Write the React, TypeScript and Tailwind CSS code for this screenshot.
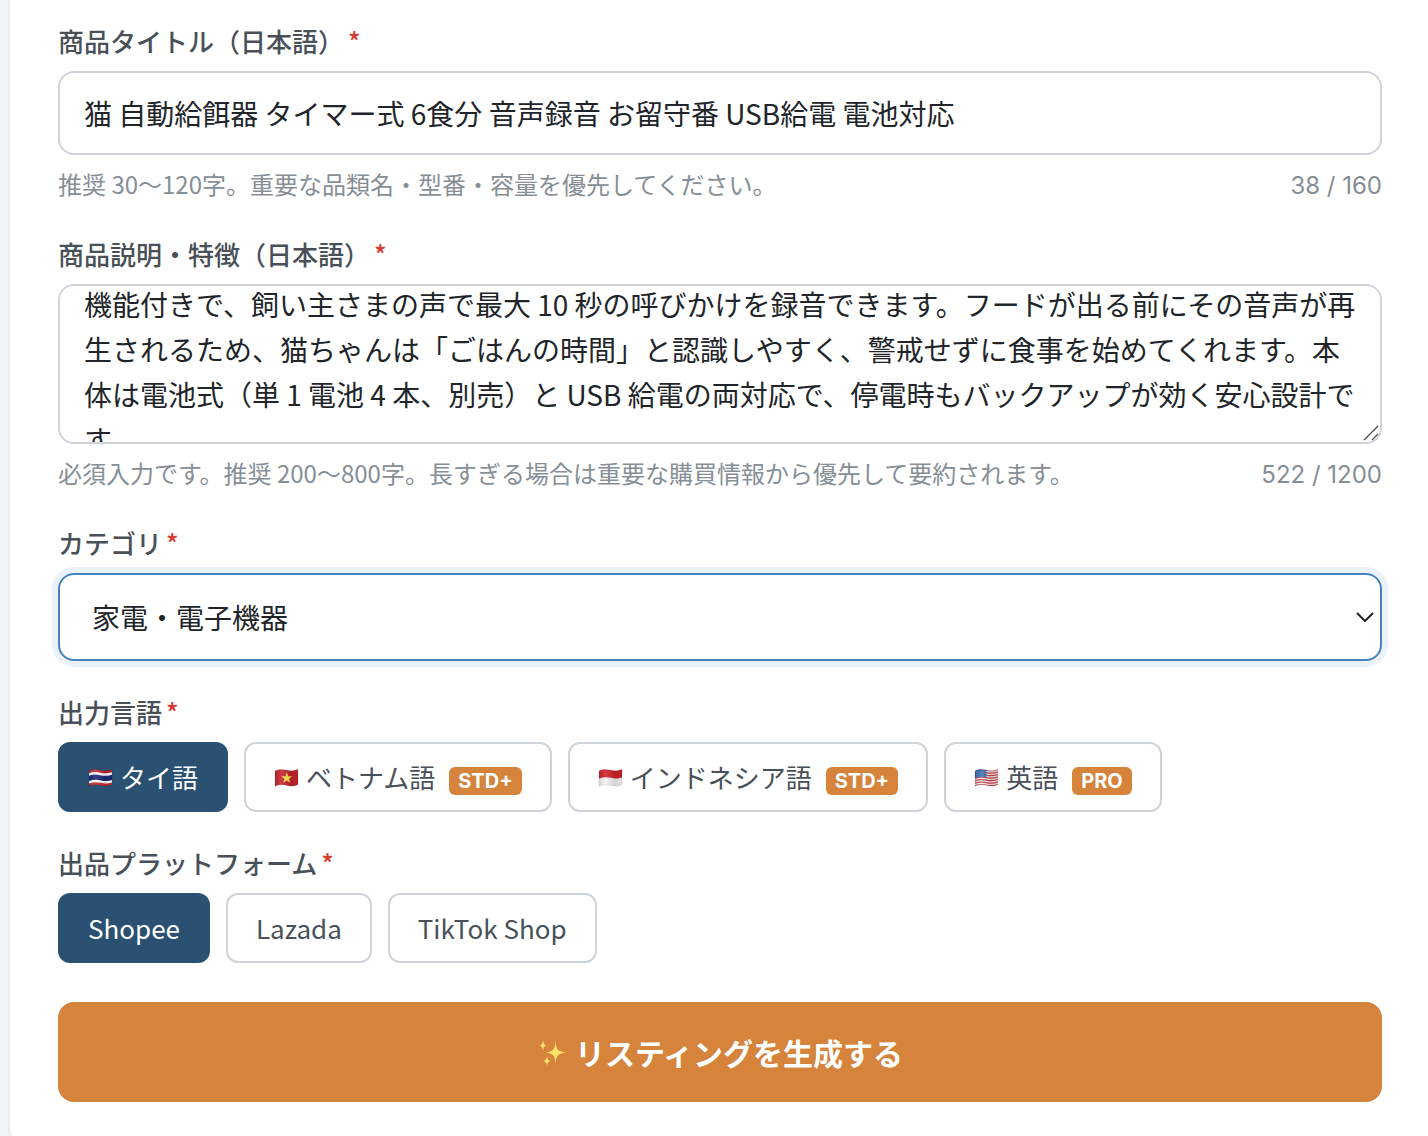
import { useEffect, useId, useRef, useState, type ReactNode } from 'react'

const INITIAL_TITLE =
  '猫 自動給餌器 タイマー式 6食分 音声録音 お留守番 USB給電 電池対応'

const INITIAL_DESCRIPTION =
  '機能付きで、飼い主さまの声で最大 10 秒の呼びかけを録音できます。フードが出る前にその音声が再生されるため、猫ちゃんは「ごはんの時間」と認識しやすく、警戒せずに食事を始めてくれます。本体は電池式（単 1 電池 4 本、別売）と USB 給電の両対応で、停電時もバックアップが効く安心設計です。'

// gently waving flag outline, shared by every flag
const WAVE = 'M1 5.5C5 3.5 8 3.6 12 4.6S20 5.6 24 3.8V19C20 21 17 20.9 13 19.9S5 19 1 20.8Z'

function Flag({ id, children }: { id: string; children: ReactNode }) {
  return (
    <svg className="size-[26px] shrink-0" viewBox="0 -1.5 26 26" aria-hidden="true">
      <defs>
        <clipPath id={`flag-${id}`}>
          <path d={WAVE} />
        </clipPath>
        <linearGradient id={`shade-${id}`} x1="0" x2="1" y1="0" y2="0">
          <stop offset="0" stopColor="#000" stopOpacity="0.12" />
          <stop offset="0.3" stopColor="#fff" stopOpacity="0.12" />
          <stop offset="0.65" stopColor="#000" stopOpacity="0.12" />
          <stop offset="1" stopColor="#000" stopOpacity="0.04" />
        </linearGradient>
      </defs>
      <g clipPath={`url(#flag-${id})`}>
        {children}
        <rect width="26" height="26" fill={`url(#shade-${id})`} />
      </g>
      <path d={WAVE} fill="none" stroke="#000" strokeOpacity="0.15" strokeWidth="0.6" />
    </svg>
  )
}

function ThaiFlag() {
  return (
    <Flag id="th">
      <rect width="26" height="26" fill="#c42a33" />
      <path d="M0 8.2C5 6.2 8 6.3 12 7.2S20 8.2 26 6V16.4C20 18.4 17 18.3 13 17.3S5 16.4 0 18.4Z" fill="#fff" />
      <path d="M0 10.6C5 8.6 8 8.7 12 9.7S20 10.7 26 8.5V14C20 16 17 15.9 13 14.9S5 14 0 16Z" fill="#1c2a78" />
    </Flag>
  )
}

function VietnamFlag() {
  return (
    <Flag id="vn">
      <rect width="26" height="26" fill="#c5242c" />
      <path d="M12.8 6.8 14.2 10.7 18.2 10.8 15.1 13.3 16.2 17.3 12.8 15 9.4 17.3 10.5 13.3 7.3 10.8 11.4 10.7Z" fill="#ffe04a" />
    </Flag>
  )
}

function IndonesiaFlag() {
  return (
    <Flag id="id">
      <rect width="26" height="26" fill="#f1f1f1" />
      <path d="M0 0H26V11.4C20 13.4 17 13.2 13 12.3S5 11.6 0 13.4Z" fill="#cf2027" />
    </Flag>
  )
}

function UsaFlag() {
  return (
    <Flag id="us">
      <rect width="26" height="26" fill="#f3eeee" />
      {[4.6, 7.1, 9.6, 12.1, 14.6, 17.1, 19.6].map((y) => (
        <path
          key={y}
          d={`M0 ${y + 0.8}C5 ${y - 1} 8 ${y - 1} 12 ${y}S20 ${y + 1} 26 ${y - 1}`}
          fill="none"
          stroke="#d0424c"
          strokeWidth="1.25"
        />
      ))}
      <path d="M0 0H12.5V12.2C8 11.2 5 11.4 0 13.2Z" fill="#2f62a8" />
      <path d="M2.5 6.6H12M2.5 8.6H12M2.5 10.6H12" stroke="#c7d6ea" strokeWidth="0.7" strokeDasharray="0.8 1.3" />
    </Flag>
  )
}

function Sparkles() {
  return (
    <svg className="size-[30px] shrink-0" viewBox="0 0 30 30" aria-hidden="true">
      <g fill="#fbe36a">
        <path d="M18.5 3C19 11.5 20 14.6 29 15.5C20 16.4 19 19.5 18.5 28C18 19.5 17 16.4 9 15.5C17 14.6 18 11.5 18.5 3Z" />
        <path d="M6 2.5C6.4 6.5 7 7.8 9.5 8.5C7 9.2 6.4 10.5 6 14.5C5.6 10.5 5 9.2 2.5 8.5C5 7.8 5.6 6.5 6 2.5Z" />
        <path d="M10 18.5C10.3 22 11 23.2 13.6 24C11 24.8 10.3 26 10 29C9.7 26 9 24.8 6.4 24C9 23.2 9.7 22 10 18.5Z" />
      </g>
    </svg>
  )
}

const languages = [
  { id: 'th', name: 'タイ語', flag: <ThaiFlag />, badge: '' },
  { id: 'vi', name: 'ベトナム語', flag: <VietnamFlag />, badge: 'STD+' },
  { id: 'id', name: 'インドネシア語', flag: <IndonesiaFlag />, badge: 'STD+' },
  { id: 'en', name: '英語', flag: <UsaFlag />, badge: 'PRO' },
]

const platforms = ['Shopee', 'Lazada', 'TikTok Shop']

function LabelText({ children }: { children: ReactNode }) {
  return (
    <>
      {children}
      <span className="ml-1 text-[#d63a30]">*</span>
    </>
  )
}

const labelClass = 'block mb-3 text-[26px] leading-[37px] font-medium text-[#495057]'

function Hint({ children, count }: { children: ReactNode; count: string }) {
  return (
    <div className="mt-3 flex items-baseline justify-between gap-4 text-2xl leading-[34px] text-[#868e96]">
      <span>{children}</span>
      <span className="shrink-0 font-['Inter',sans-serif]">{count}</span>
    </div>
  )
}

function Chip({
  active,
  onClick,
  children,
}: {
  active: boolean
  onClick: () => void
  children: ReactNode
}) {
  return (
    <button
      type="button"
      aria-pressed={active}
      onClick={onClick}
      className={`flex items-center gap-[6px] rounded-xl border-2 px-7 py-[14px] text-[26px] leading-[38px] ${
        active
          ? 'border-[#2a5072] bg-[#2a5072] text-white'
          : 'border-[#ced4da] bg-white text-[#495057]'
      }`}
    >
      {children}
    </button>
  )
}

export default function App() {
  const [title, setTitle] = useState(INITIAL_TITLE)
  const [description, setDescription] = useState(INITIAL_DESCRIPTION)
  const [language, setLanguage] = useState('th')
  const [platform, setPlatform] = useState('Shopee')
  const descriptionRef = useRef<HTMLTextAreaElement>(null)
  const uid = useId()

  useEffect(() => {
    if (descriptionRef.current) descriptionRef.current.scrollTop = 24
  }, [])

  return (
    <div className="h-screen overflow-y-auto bg-[#f0f4f9] pl-2 font-['Noto_Sans_CJK_JP',sans-serif] [scrollbar-width:none]">
      <form
        className="flex flex-col gap-8 rounded-bl-3xl border-b-2 border-l-2 border-[#e9ecef] bg-white pt-[22px] pr-[46px] pb-12 pl-12"
        onSubmit={(e) => e.preventDefault()}
      >
        <div>
          <label htmlFor={`${uid}-title`} className={labelClass}>
            <LabelText>商品タイトル（日本語）</LabelText>
          </label>
          <input
            id={`${uid}-title`}
            type="text"
            value={title}
            onChange={(e) => setTitle(e.target.value)}
            className="block h-[84px] w-full rounded-2xl border-2 border-[#ced4da] bg-white px-6 text-[28px] text-[#212529] outline-none"
          />
          <Hint count="38 / 160">
            推奨 30〜120字。重要な品類名・型番・容量を優先してください。
          </Hint>
        </div>

        <div>
          <label htmlFor={`${uid}-description`} className={labelClass}>
            <LabelText>商品説明・特徴（日本語）</LabelText>
          </label>
          <div className="relative">
            <textarea
              id={`${uid}-description`}
              ref={descriptionRef}
              value={description}
              onChange={(e) => setDescription(e.target.value)}
              className="block h-40 w-full resize-none rounded-2xl border-2 border-[#ced4da] bg-white px-6 py-5 text-[28px] leading-[45px] text-[#212529] outline-none [scrollbar-width:none]"
            />
            <svg
              className="pointer-events-none absolute right-[3px] bottom-[3px] size-4"
              viewBox="0 0 16 16"
              stroke="#555"
              strokeWidth="1.4"
              aria-hidden="true"
            >
              <path d="M1 15 15 1M9 15 15 9" />
            </svg>
          </div>
          <Hint count="522 / 1200">
            必須入力です。推奨 200〜800字。長すぎる場合は重要な購買情報から優先して要約されます。
          </Hint>
        </div>

        <div>
          <label htmlFor={`${uid}-category`} className={labelClass}>
            <LabelText>カテゴリ</LabelText>
          </label>
          <div className="relative">
            <select
              id={`${uid}-category`}
              className="block h-[88px] w-full appearance-none rounded-2xl border-2 border-[#4682bd] bg-white px-8 text-[28px] text-[#212529] ring-6 ring-[#ebf1f8] outline-none"
            >
              <option>家電・電子機器</option>
            </select>
            <svg
              className="pointer-events-none absolute top-9 right-2 h-4 w-[18px]"
              viewBox="0 0 18 16"
              fill="none"
              stroke="#212529"
              strokeWidth="2"
              strokeLinecap="round"
              strokeLinejoin="round"
              aria-hidden="true"
            >
              <path d="M1.5 4.5 9 12 16.5 4.5" />
            </svg>
          </div>
        </div>

        <div role="group" aria-labelledby={`${uid}-language`}>
          <div id={`${uid}-language`} className={labelClass}>
            <LabelText>出力言語</LabelText>
          </div>
          <div className="flex flex-wrap gap-4">
            {languages.map(({ id, name, flag, badge }) => (
              <Chip key={id} active={language === id} onClick={() => setLanguage(id)}>
                {flag}
                <span>{name}</span>
                {badge && (
                  <span className="mt-2 ml-2 rounded-md bg-[#d6833c] px-[9px] font-['Inter',sans-serif] text-xl leading-7 font-bold text-white">
                    {badge}
                  </span>
                )}
              </Chip>
            ))}
          </div>
        </div>

        <div role="group" aria-labelledby={`${uid}-platform`}>
          <div id={`${uid}-platform`} className={labelClass}>
            <LabelText>出品プラットフォーム</LabelText>
          </div>
          <div className="flex flex-wrap gap-4">
            {platforms.map((name) => (
              <Chip key={name} active={platform === name} onClick={() => setPlatform(name)}>
                {name}
              </Chip>
            ))}
          </div>
        </div>

        <button
          type="submit"
          className="mt-[7px] flex h-[100px] w-full items-center justify-center gap-2 rounded-2xl bg-[#d6833c] text-[30px] font-bold text-white"
        >
          <Sparkles />
          リスティングを生成する
        </button>
      </form>
    </div>
  )
}
